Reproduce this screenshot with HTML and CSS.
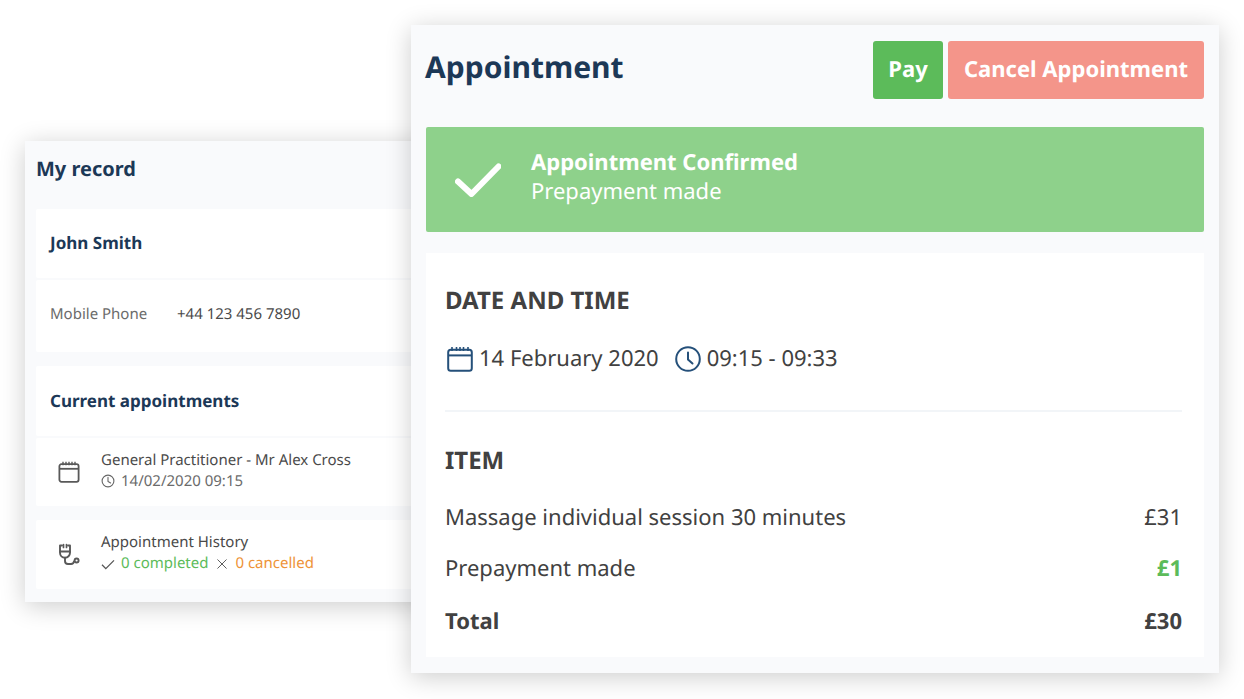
FILE: index.html
```html
<!DOCTYPE html>
<html lang="en">
<head>
<meta charset="utf-8">
<title>Appointment</title>
<link rel="stylesheet" href="styles.css">
</head>
<body>
<main class="stage">
  <section class="window record">
    <h2 class="record-title">My record</h2>
    <div class="rcard name-card"><h3 class="rhead">John Smith</h3></div>
    <div class="rcard phone-card"><span class="phone-label">Mobile Phone</span><span class="phone-value">+44 123 456 7890</span></div>
    <div class="rcard current-card"><h3 class="rhead">Current appointments</h3></div>
    <div class="rcard row-card appt-card">
      <svg class="row-icon" viewBox="0 0 24 24" fill="none" stroke="#595959" stroke-width="1.8" stroke-linejoin="round"><rect x="2.4" y="4.2" width="19.2" height="17.6" rx="2"/><path d="M2.4 8.8h19.2"/><path d="M6 1.8v3.4M9 1.8v3.4M12 1.8v3.4M15 1.8v3.4M18 1.8v3.4" stroke-width="1.4"/></svg>
      <div class="row-text">
        <div class="row-line">General Practitioner - Mr Alex Cross</div>
        <div class="row-line sub"><svg class="mini" viewBox="0 0 14 14" fill="none" stroke="#666" stroke-width="1.1"><circle cx="7" cy="7" r="5.9"/><path d="M7 3.4V7.4L9.6 9" stroke-linecap="round"/></svg>14/02/2020 09:15</div>
      </div>
    </div>
    <div class="rcard row-card history-card">
      <svg class="row-icon" viewBox="0 0 24 24" fill="none" stroke="#595959" stroke-width="1.9" stroke-linecap="round" stroke-linejoin="round"><path d="M5 2.5H3v7.2a5 5 0 0 0 10 0V2.500h-2"/><path d="M3 8.500h10"/><path d="M6.500 1.500v3M9.500 1.500v3" stroke-width="1.700"/><path d="M8 14.700v3.300a3 3 0 0 0 3 3h3a3 3 0 0 0 3-2.600"/><circle cx="19.600" cy="17.500" r="2"/></svg>
      <div class="row-text">
        <div class="row-line">Appointment History</div>
        <div class="row-line sub">
          <svg class="mini" viewBox="0 0 14 14" fill="none" stroke="#555" stroke-width="1.300"><path d="M1 7.800l3.800 3.800L13 3.400"/></svg><span class="done">0 completed</span>
          <svg class="mini mini-x" viewBox="0 0 14 14" fill="none" stroke="#555" stroke-width="1.100"><path d="M1.700 1.700l10.600 10.600M12.300 1.700L1.700 12.300"/></svg><span class="cancelled">0 cancelled</span>
        </div>
      </div>
    </div>
  </section>

  <section class="window appointment">
    <header class="appt-head">
      <h1 class="appt-title">Appointment</h1>
      <div class="actions">
        <button class="btn pay">Pay</button>
        <button class="btn cancel">Cancel Appointment</button>
      </div>
    </header>
    <div class="alert">
      <svg class="alert-check" viewBox="0 0 46 34" fill="none" stroke="#fff" stroke-width="6" stroke-linecap="round" stroke-linejoin="round"><path d="M3 18.500L16.500 31L43.500 3.500"/></svg>
      <div class="alert-text">
        <div class="alert-title">Appointment Confirmed</div>
        <div class="alert-sub">Prepayment made</div>
      </div>
    </div>
    <div class="details">
      <h3 class="section-head">DATE AND TIME</h3>
      <div class="when">
        <svg class="when-icon" viewBox="0 0 26 26" fill="none" stroke="#25507a" stroke-width="2" stroke-linejoin="round"><rect x="1.200" y="3.800" width="23.600" height="21" rx="2.500"/><path d="M1.200 9.400h23.600"/><path d="M5 1v4M9.500 1v4M13 1v4M16.500 1v4M21 1v4" stroke-width="1.600"/></svg>
        <span class="when-date">14 February 2020</span>
        <svg class="when-icon clock" viewBox="0 0 26 26" fill="none" stroke="#25507a" stroke-width="2"><circle cx="13" cy="13" r="11.800"/><path d="M13 6.500V13.500L17.500 17.500" stroke-linecap="round"/></svg>
        <span>09:15 - 09:33</span>
      </div>
      <hr class="rule">
      <h3 class="section-head item-head">ITEM</h3>
      <div class="line line-1"><span>Massage individual session 30 minutes</span><span>£31</span></div>
      <div class="line line-2"><span>Prepayment made</span><b class="paid">£1</b></div>
      <div class="line line-3 total"><span>Total</span><span>£30</span></div>
    </div>
  </section>
</main>
</body>
</html>
```
FILE: styles.css
```css
* { box-sizing: border-box; }
html, body { margin: 0; padding: 0; background: #fff; }
body { font-family: "Noto Sans", "Open Sans", sans-serif; color: #414141; text-rendering: geometricPrecision; }
.stage { position: relative; width: 1244px; height: 699px; overflow: hidden; }
h1, h2, h3 { margin: 0; }

.window { position: absolute; background: #f9fafc; box-shadow: 0 4px 24px rgba(0,0,0,.2); }

.record { left: 25px; top: 141px; width: 420px; height: 461px; padding: 0 11px; }
.record-title { height: 68px; padding-top: 14px; font-size: 20px; line-height: 28px; font-weight: 700; color: #1c3857; }
.rcard { background: #fff; border-radius: 2px; }
.rhead { font-size: 17px; line-height: 24px; font-weight: 700; color: #1c3857; }
.name-card { height: 69px; padding: 22px 14px 0; }
.phone-card { height: 72px; margin-top: 2px; padding: 23px 14px 0; display: flex; font-size: 15px; line-height: 22px; }
.phone-label { width: 127px; color: #6b6b6b; }
.phone-value { color: #4a4a4a; }
.current-card { height: 70px; margin-top: 14px; padding: 23px 14px 0; }
.row-card { display: flex; align-items: center; height: 68px; margin-top: 2px; padding-left: 21px; }
.history-card { height: 69px; margin-top: 14px; }
.row-icon { width: 24px; height: 24px; flex: none; }
.row-text { margin: -3px 0 0 20px; font-size: 15px; line-height: 21px; color: #4a4a4a; }
.row-line { display: flex; align-items: center; white-space: nowrap; }
.sub { color: #6b6b6b; }
.mini { width: 14px; height: 14px; margin-right: 6px; flex: none; }
.mini-x { width: 12px; height: 12px; margin: 0 7px 0 8px; }
.done { color: #5cbb5a; }
.cancelled { color: #ee9337; }

.appointment { left: 411px; top: 25px; width: 808px; height: 648px; padding: 16px 15px 0; }
.appt-head { display: flex; justify-content: space-between; height: 58px; }
.appt-title { margin-left: -1px; font-size: 30px; line-height: 52px; font-weight: 700; color: #1c3857; }
.actions { display: flex; gap: 5px; }
.btn { height: 58px; border: 0; border-radius: 3px; color: #fff; font: 700 22px/30px "Noto Sans", sans-serif; text-rendering: geometricPrecision; padding: 0 0 2px; }
.pay { width: 70px; background: #5cbb5a; }
.cancel { width: 256px; background: #f4958a; }

.alert { display: flex; align-items: center; height: 105px; margin-top: 28px; background: #8ed18b; border-radius: 2px; padding: 0 0 6px 29px; color: #fff; }
.alert-check { width: 46px; height: 34px; flex: none; margin-top: 6px; }
.alert-text { margin-left: 30px; font-size: 22px; line-height: 29px; }
.alert-title { font-weight: 700; }

.details { height: 404px; margin-top: 21px; padding: 32px 22px 0 19px; background: #fff; font-size: 22px; line-height: 30px; }
.section-head { font-size: 24px; line-height: 32px; font-weight: 700; color: #414141; }
.when { display: flex; align-items: center; margin-top: 26px; height: 30px; }
.when-icon { width: 26px; height: 26px; flex: none; margin: 2px 6px 0 2px; }
.when-date { margin-right: 16px; }
.clock { margin-right: 6px; margin-left: 0; }
.rule { height: 2px; margin: 37px 0 0; border: 0; background: #f2f5f8; }
.item-head { margin-top: 33px; }
.line { display: flex; justify-content: space-between; }
.line-1 { margin-top: 25px; }
.line-2 { margin-top: 21px; }
.line-3 { margin-top: 23px; }
.paid { color: #5cbb5a; font-weight: 700; }
.total { font-weight: 700; }
```
